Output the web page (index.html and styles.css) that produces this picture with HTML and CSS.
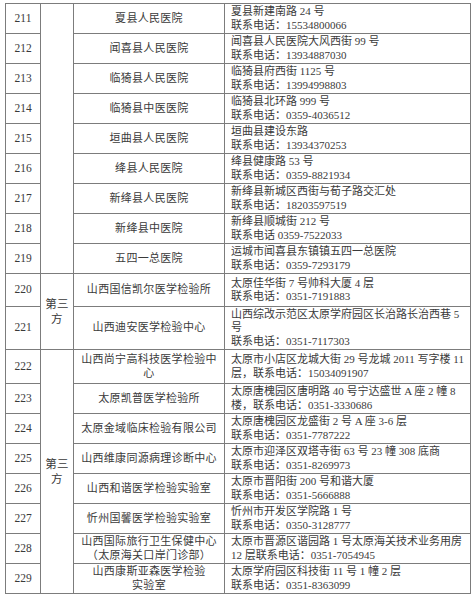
FILE: index.html
```html
<!DOCTYPE html>
<html lang="zh">
<head>
<meta charset="utf-8">
<link rel="stylesheet" href="styles.css">
</head>
<body>
<table class="list">
  <colgroup>
    <col class="c-no">
    <col class="c-type">
    <col class="c-name">
    <col class="c-addr">
  </colgroup>
  <tbody>
    <tr class="r"><td class="no">211</td><td class="type" rowspan="9"></td><td class="name">夏县人民医院</td><td class="addr">夏县新建南路 24 号<br>联系电话：15534800066</td></tr>
    <tr class="r"><td class="no">212</td><td class="name">闻喜县人民医院</td><td class="addr">闻喜县人民医院大风西街 99 号<br>联系电话：13934887030</td></tr>
    <tr class="r"><td class="no">213</td><td class="name">临猗县人民医院</td><td class="addr">临猗县府西街 1125 号<br>联系电话：13994998803</td></tr>
    <tr class="r"><td class="no">214</td><td class="name">临猗县中医医院</td><td class="addr">临猗县北环路 999 号<br>联系电话：0359-4036512</td></tr>
    <tr class="r"><td class="no">215</td><td class="name">垣曲县人民医院</td><td class="addr">垣曲县建设东路<br>联系电话：13934370253</td></tr>
    <tr class="r"><td class="no">216</td><td class="name">绛县人民医院</td><td class="addr">绛县健康路 53 号<br>联系电话：0359-8821934</td></tr>
    <tr class="r"><td class="no">217</td><td class="name">新绛县人民医院</td><td class="addr">新绛县新城区西街与荀子路交汇处<br>联系电话：18203597519</td></tr>
    <tr class="r"><td class="no">218</td><td class="name">新绛县中医院</td><td class="addr">新绛县顺城街 212 号<br>联系电话 0359-7522033</td></tr>
    <tr class="r"><td class="no">219</td><td class="name">五四一总医院</td><td class="addr">运城市闻喜县东镇镇五四一总医院<br>联系电话：0359-7293179</td></tr>
    <tr class="r33"><td class="no">220</td><td class="type" rowspan="2">第三方</td><td class="name">山西国信凯尔医学检验所</td><td class="addr">太原佳华街 7 号帅科大厦 4 层<br>联系电话：0351-7191883</td></tr>
    <tr class="r43"><td class="no">221</td><td class="name">山西迪安医学检验中心</td><td class="addr">山西综改示范区太原学府园区长治路长治西巷 5<br>号<br>联系电话：0351-7117303</td></tr>
    <tr class="r34"><td class="no">222</td><td class="type" rowspan="8">第三方</td><td class="name">山西尚宁高科技医学检验中心</td><td class="addr">太原市小店区龙城大街 29 号龙城 2011 写字楼 11<br>层，联系电话：15034091907</td></tr>
    <tr class="r"><td class="no">223</td><td class="name">太原凯普医学检验所</td><td class="addr">太原唐槐园区唐明路 40 号宁达盛世 A 座 2 幢 8<br>楼，联系电话：0351-3330686</td></tr>
    <tr class="r"><td class="no">224</td><td class="name">太原金域临床检验有限公司</td><td class="addr">太原唐槐园区龙盛街 2 号 A 座 3-6 层<br>联系电话：0351-7787222</td></tr>
    <tr class="r"><td class="no">225</td><td class="name">山西维康同源病理诊断中心</td><td class="addr">太原市迎泽区双塔寺街 63 号 23 幢 308 底商<br>联系电话：0351-8269973</td></tr>
    <tr class="r"><td class="no">226</td><td class="name">山西和谐医学检验实验室</td><td class="addr">太原市晋阳街 200 号和谐大厦<br>联系电话：0351-5666888</td></tr>
    <tr class="r"><td class="no">227</td><td class="name">忻州国馨医学检验实验室</td><td class="addr">忻州市开发区学院路 1 号<br>联系电话：0350-3128777</td></tr>
    <tr class="r"><td class="no">228</td><td class="name">山西国际旅行卫生保健中心<br>（太原海关口岸门诊部）</td><td class="addr">太原市晋源区谐园路 1 号太原海关技术业务用房<br>12 层联系电话：0351-7054945</td></tr>
    <tr class="r"><td class="no">229</td><td class="name">山西康斯亚森医学检验<br>实验室</td><td class="addr">太原学府园区科技街 11 号 1 幢 2 层<br>联系电话：0351-8363099</td></tr>
  </tbody>
</table>
</body>
</html>
```
FILE: styles.css
```css
html, body {
  margin: 0;
  padding: 0;
  background: #ffffff;
}

body {
  padding: 3px 0 0 5px;
  font-family: "Liberation Serif", "Noto Sans CJK SC", serif;
  font-size: 11px;
  color: #3a3a3a;
}

.list {
  border-collapse: collapse;
  table-layout: fixed;
  width: 465px;
}

.c-no { width: 35px; }
.c-type { width: 33px; }
.c-name { width: 151px; }
.c-addr { width: 246px; }

.list td {
  border: 1px solid #7c7c7c;
  padding: 0;
  vertical-align: middle;
  line-height: 13.5px;
  letter-spacing: 0.3px;
  overflow: hidden;
}

.r { height: 30px; }
.r33 { height: 33px; }
.r43 { height: 43px; }
.r34 { height: 34px; }

.list td.no {
  text-align: center;
  font-size: 11.5px;
  letter-spacing: 0;
}

.list td.type {
  text-align: center;
  padding: 0 4px;
  line-height: 15px;
  font-size: 11.5px;
}

.list td.name {
  text-align: center;
  padding: 0 4px;
}

.list td.addr {
  text-align: left;
  padding: 0 0 0 6px;
  letter-spacing: 0;
  white-space: nowrap;
}
```
